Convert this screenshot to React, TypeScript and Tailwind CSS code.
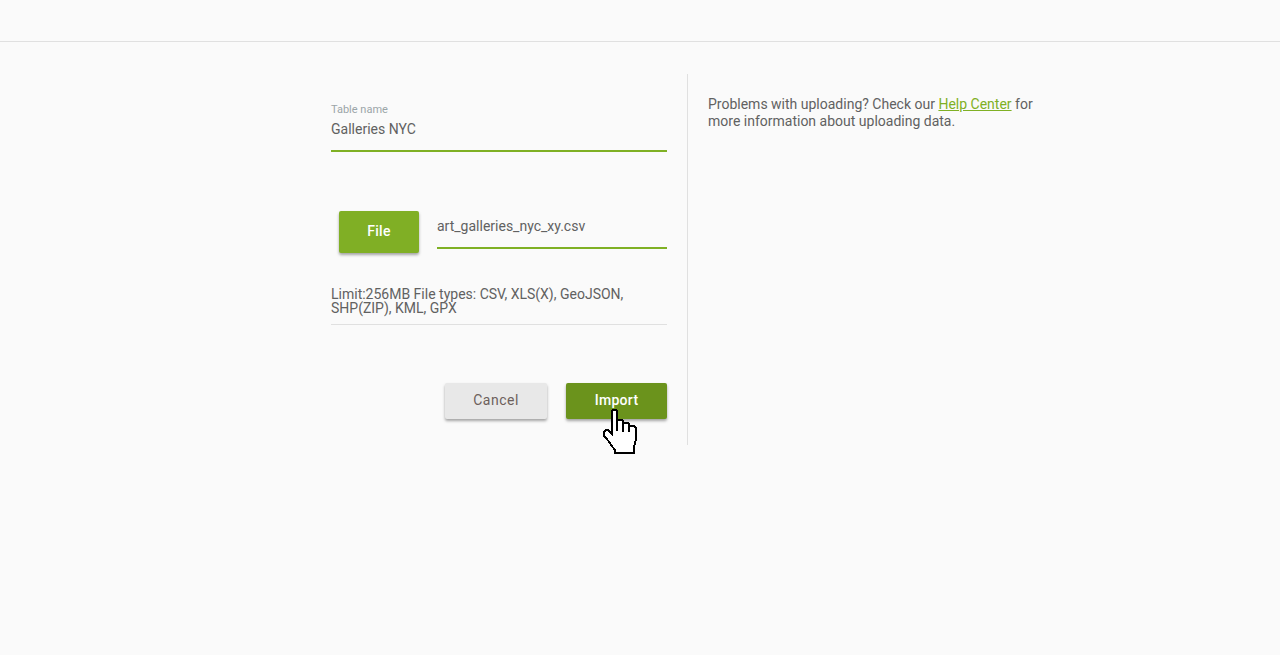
export default function App() {
  return (
    <div className="relative min-h-[655px] bg-[#fafafa] font-['Roboto',sans-serif] text-[#616161]">
      <header className="h-[42px] border-b border-[#e0e0e0]" />
      <main className="flex pt-[32px] pl-[331px]">
        <section className="w-[336px] h-[371px] pt-[29px]">
          <div className="h-[49px] border-b-2 border-[#7fb024]">
            <div className="text-[11px] leading-[14px] text-[#9aa5a8]">Table name</div>
            <div className="text-[14px] leading-[16px] mt-[4px]">Galleries NYC</div>
          </div>
          <div className="flex mt-[59px] h-[38px]">
            <button className="ml-[8px] w-[80px] h-[42px] pb-[2px] rounded-[2px] bg-[#80af25] text-white text-[14px] font-medium tracking-[0.3px] shadow-[0_2px_3px_rgba(0,0,0,0.35)]">File</button>
            <div className="ml-[18px] w-[230px] h-[38px] border-b-2 border-[#7fb024] text-[14px] leading-[16px] pt-[7px]">art_galleries_nyc_xy.csv</div>
          </div>
          <div className="mt-[38px] h-[38px] border-b border-[#e0e0e0] text-[14px] leading-[14px]">
            Limit:256MB File types: CSV, XLS(X), GeoJSON,<br />SHP(ZIP), KML, GPX
          </div>
          <div className="flex justify-end gap-[19px] mt-[58px]">
            <button className="w-[102px] h-[36px] pb-[2px] rounded-[2px] bg-[#e8e8e8] text-[#6d5f5b] text-[14px] tracking-[0.5px] shadow-[0_2px_3px_rgba(0,0,0,0.35)]">Cancel</button>
            <button className="w-[101px] h-[36px] pb-[2px] rounded-[2px] bg-[#6b931c] text-white text-[14px] font-medium tracking-[0.3px] shadow-[0_2px_3px_rgba(0,0,0,0.35)]">Import</button>
          </div>
        </section>
        <div className="ml-[20px] w-px h-[371px] bg-[#e0e0e0]" />
        <aside className="ml-[20px] w-[340px] pt-[22px] text-[14px] leading-[17px]">
          Problems with uploading? Check our <a className="text-[#7fb024] underline" href="#">Help Center</a> for<br />more information about uploading data.
        </aside>
      </main>
      <svg className="absolute left-[603px] top-[409px]" width="36" height="46" viewBox="0 0 36 46" shapeRendering="crispEdges">
        <path d="M10 1H13L14 2V11H19L20 12V14H25L26 15V17H31L33 19V30L32 34L31 38V44H12V41L9 37L6 33L4 30L1 27V23L3 21H5L9 25V2Z" fill="#fff" stroke="#000" strokeWidth="1.8" />
        <path d="M14 11V22M20 12V23M26 15V23" fill="none" stroke="#000" strokeWidth="1.4" />
      </svg>
    </div>
  );
}
